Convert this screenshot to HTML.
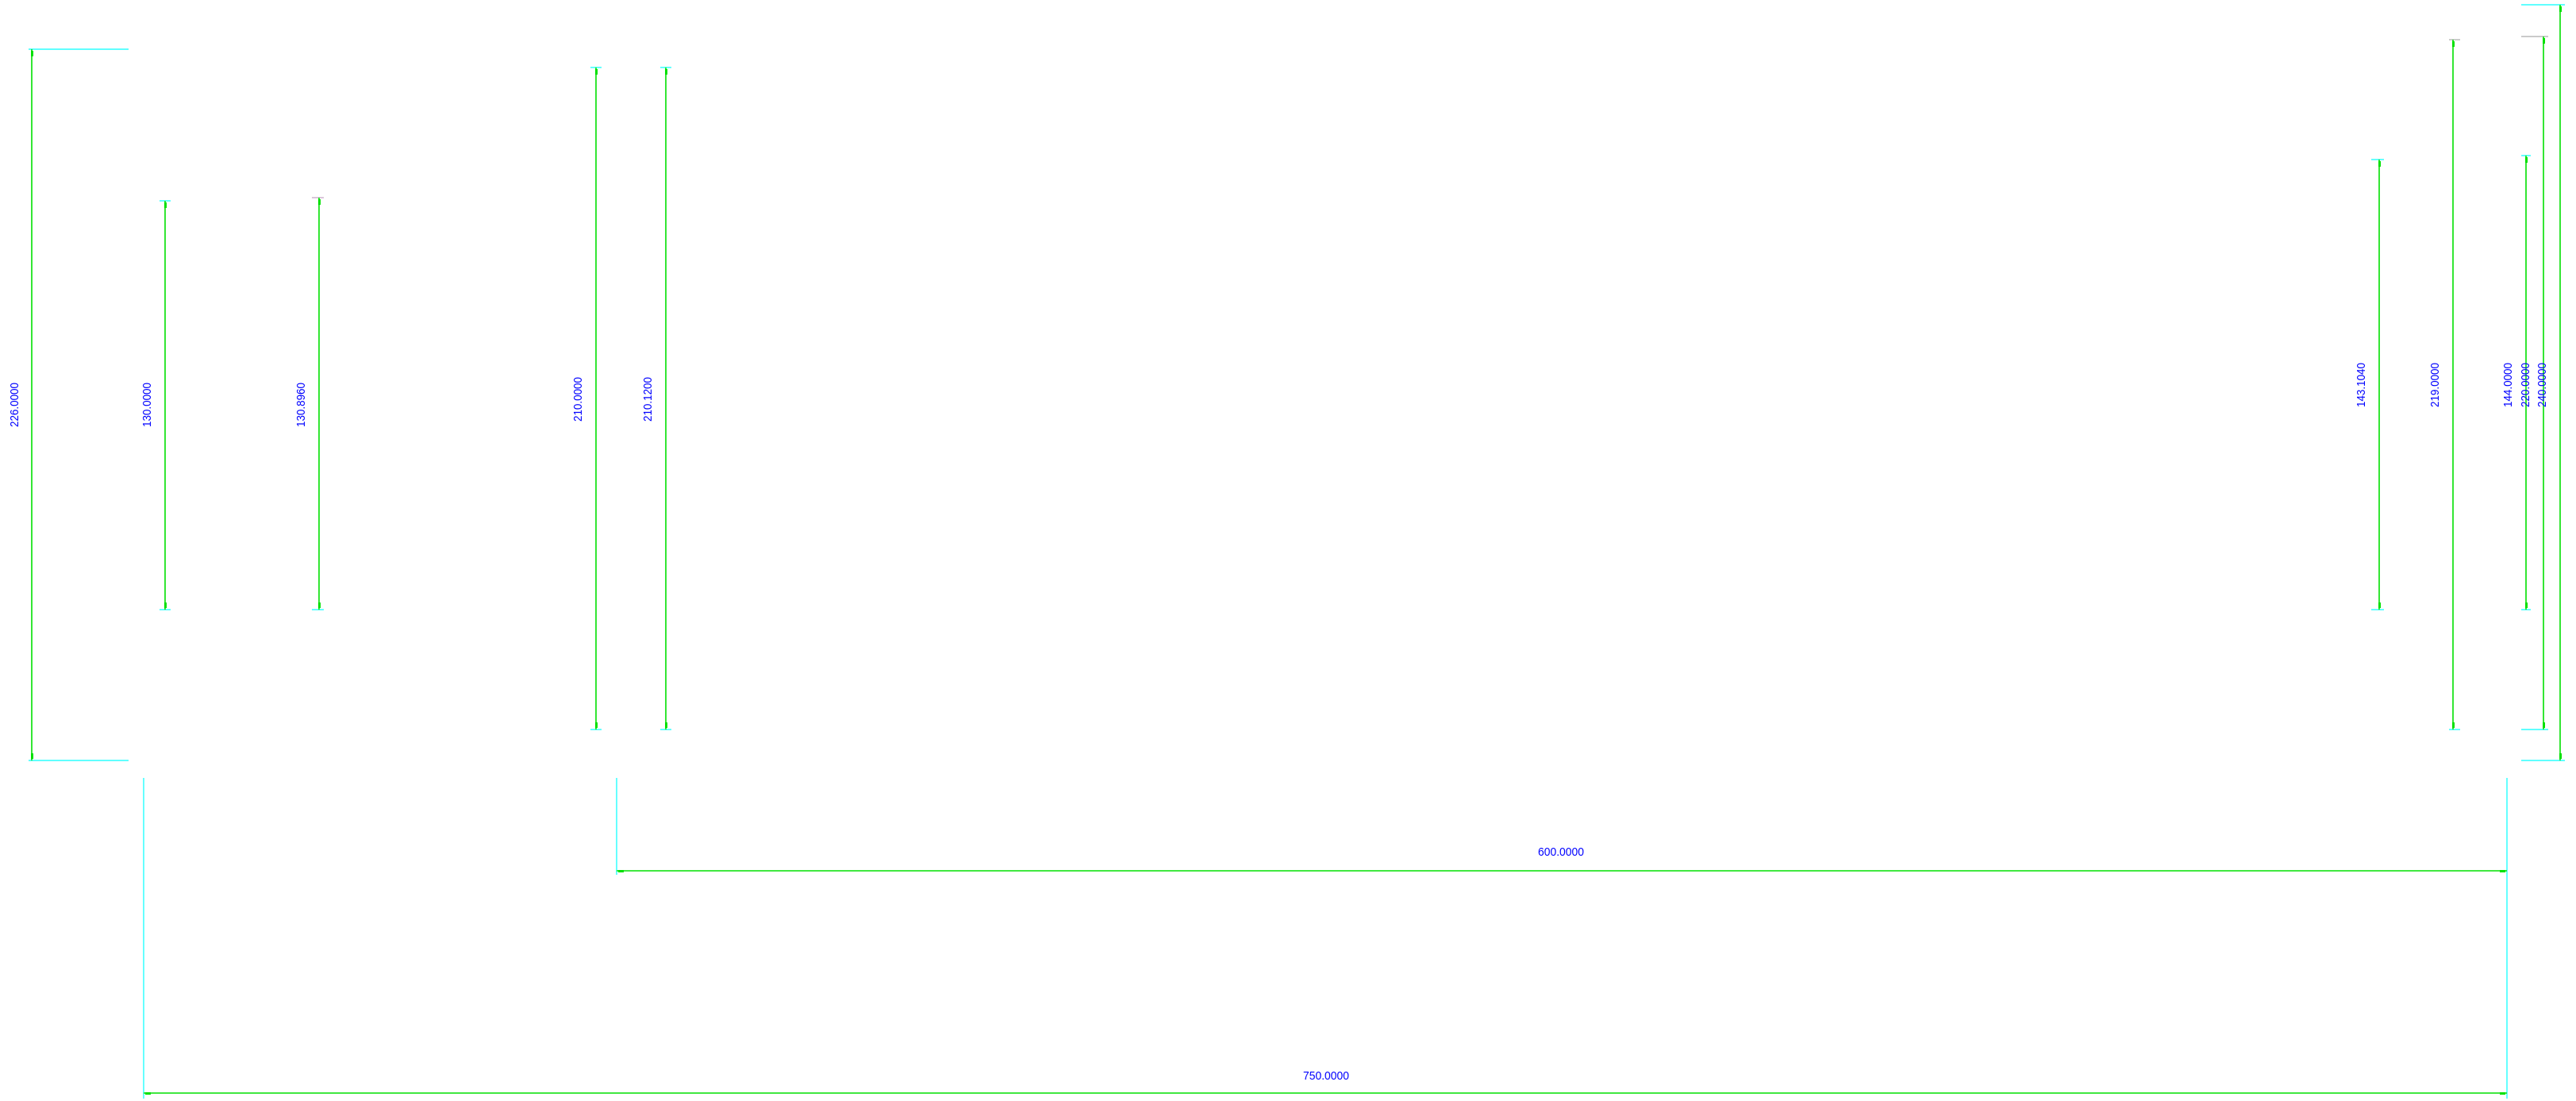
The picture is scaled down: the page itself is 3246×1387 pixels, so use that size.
<!DOCTYPE html>
<html><head><meta charset="utf-8"><style>
html,body{margin:0;padding:0;background:#fff;}
svg{display:block}
text{font-family:"Liberation Sans",sans-serif;font-size:15px;fill:#0000ff;}
</style></head><body>
<svg width="3246" height="1387" viewBox="0 0 3246 1387" xmlns="http://www.w3.org/2000/svg">
<g stroke="#00ffff" stroke-width="1.2" fill="none">
<!-- extension lines -->
<line x1="36" y1="62" x2="162" y2="62"/><line x1="36" y1="958" x2="162" y2="958"/>
<line x1="201" y1="253" x2="215" y2="253"/><line x1="201" y1="768" x2="215" y2="768"/>
<line x1="393" y1="249" x2="408" y2="249" stroke="#c0a0c0"/><line x1="393" y1="768" x2="408" y2="768"/>
<line x1="744" y1="85" x2="758" y2="85"/><line x1="744" y1="919" x2="758" y2="919"/>
<line x1="832" y1="85" x2="846" y2="85"/><line x1="832" y1="919" x2="846" y2="919"/>
<line x1="2988" y1="201" x2="3004" y2="201"/><line x1="2988" y1="768" x2="3004" y2="768"/>
<line x1="3086" y1="50" x2="3100" y2="50" stroke="#aaaaaa"/><line x1="3086" y1="919" x2="3100" y2="919"/>
<line x1="3177" y1="196" x2="3189" y2="196"/><line x1="3177" y1="768" x2="3189" y2="768"/>
<line x1="3177" y1="46" x2="3211" y2="46" stroke="#aaaaaa"/><line x1="3177" y1="919" x2="3211" y2="919"/>
<line x1="3177" y1="6" x2="3232" y2="6"/><line x1="3177" y1="958" x2="3232" y2="958"/>
<line x1="181" y1="980" x2="181" y2="1384"/>
<line x1="777" y1="980" x2="777" y2="1102"/>
<line x1="3159" y1="980" x2="3159" y2="1384"/>
</g>
<g stroke="#00e000" stroke-width="1.6">
<line x1="40" y1="62" x2="40" y2="958"/>
<line x1="208" y1="253" x2="208" y2="768"/>
<line x1="402" y1="249" x2="402" y2="768"/>
<line x1="751" y1="85" x2="751" y2="919"/>
<line x1="839" y1="85" x2="839" y2="919"/>
<line x1="2998" y1="201" x2="2998" y2="768"/>
<line x1="3091" y1="50" x2="3091" y2="919"/>
<line x1="3183" y1="196" x2="3183" y2="768"/>
<line x1="3205" y1="46" x2="3205" y2="919"/>
<line x1="3226" y1="6" x2="3226" y2="958"/>
<line x1="777" y1="1097" x2="3159" y2="1097"/>
<line x1="181" y1="1377" x2="3159" y2="1377"/>
</g>
<g fill="#00e000">
<rect x="39" y="64" width="3" height="7"/><rect x="39" y="949" width="3" height="7"/>
<rect x="207" y="255" width="3" height="7"/><rect x="207" y="759" width="3" height="7"/>
<rect x="401" y="251" width="3" height="7"/><rect x="401" y="759" width="3" height="7"/>
<rect x="750" y="87" width="3" height="7"/><rect x="750" y="910" width="3" height="7"/>
<rect x="838" y="87" width="3" height="7"/><rect x="838" y="910" width="3" height="7"/>
<rect x="2997" y="203" width="3" height="7"/><rect x="2997" y="759" width="3" height="7"/>
<rect x="3090" y="52" width="3" height="7"/><rect x="3090" y="910" width="3" height="7"/>
<rect x="3182" y="198" width="3" height="7"/><rect x="3182" y="759" width="3" height="7"/>
<rect x="3204" y="48" width="3" height="7"/><rect x="3204" y="910" width="3" height="7"/>
<rect x="3225" y="8" width="3" height="7"/><rect x="3225" y="949" width="3" height="7"/>
<rect x="779" y="1096" width="7" height="3"/><rect x="3150" y="1096" width="7" height="3"/>
<rect x="183" y="1376" width="7" height="3"/><rect x="3150" y="1376" width="7" height="3"/>
</g>
<g text-anchor="middle">
<text transform="translate(23,510) rotate(-90)" textLength="56" lengthAdjust="spacingAndGlyphs">226.0000</text>
<text transform="translate(190,510) rotate(-90)" textLength="56" lengthAdjust="spacingAndGlyphs">130.0000</text>
<text transform="translate(384,510) rotate(-90)" textLength="56" lengthAdjust="spacingAndGlyphs">130.8960</text>
<text transform="translate(733,503) rotate(-90)" textLength="56" lengthAdjust="spacingAndGlyphs">210.0000</text>
<text transform="translate(821,503) rotate(-90)" textLength="56" lengthAdjust="spacingAndGlyphs">210.1200</text>
<text transform="translate(2980,485) rotate(-90)" textLength="56" lengthAdjust="spacingAndGlyphs">143.1040</text>
<text transform="translate(3073,485) rotate(-90)" textLength="56" lengthAdjust="spacingAndGlyphs">219.0000</text>
<text transform="translate(3165,485) rotate(-90)" textLength="56" lengthAdjust="spacingAndGlyphs">144.0000</text>
<text transform="translate(3187,485) rotate(-90)" textLength="56" lengthAdjust="spacingAndGlyphs">220.0000</text>
<text transform="translate(3208,485) rotate(-90)" textLength="56" lengthAdjust="spacingAndGlyphs">240.0000</text>
<text x="1967" y="1078" textLength="58" lengthAdjust="spacingAndGlyphs">600.0000</text>
<text x="1671" y="1360" textLength="58" lengthAdjust="spacingAndGlyphs">750.0000</text>
</g>
</svg>
</body></html>
